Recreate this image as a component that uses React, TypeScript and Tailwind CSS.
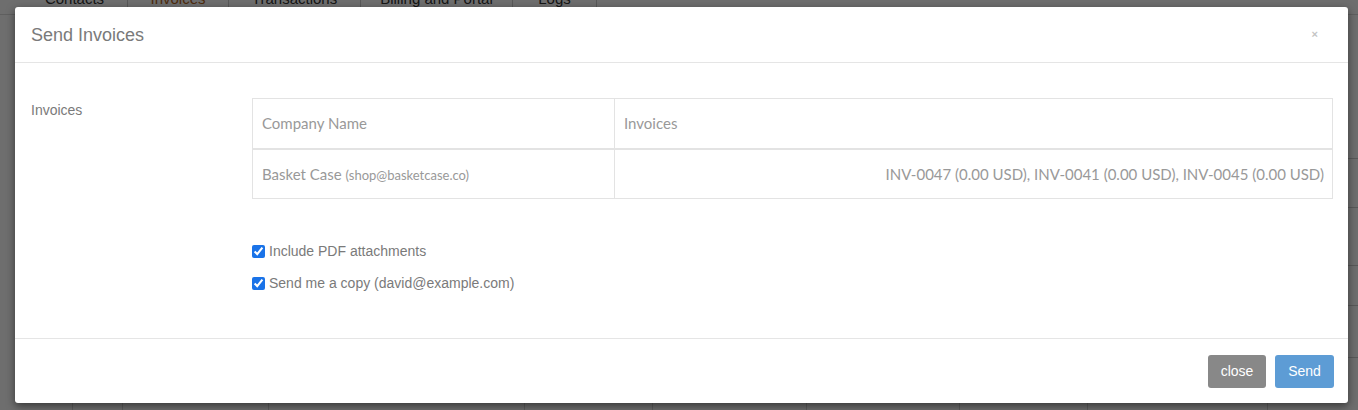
import React from "react";

const tabs = [
  { label: "Contacts", w: "w-[106px]", active: false },
  { label: "Invoices", w: "w-[101px]", active: true },
  { label: "Transactions", w: "w-[132px]", active: false },
  { label: "Billing and Portal", w: "w-[152px]", active: false },
  { label: "Logs", w: "w-[84px]", active: false },
];

const colLines = [72, 122, 268, 524, 652, 806, 959, 1087, 1267];

export default function App() {
  return (
    <div className="relative w-[1358px] h-[410px] overflow-hidden bg-white font-['Liberation_Sans',Arial,sans-serif]">
      {/* background page */}
      <div className="flex h-[30px] mt-[-15px] items-end pl-[22px] border-b border-[#ddd]">
        {tabs.map((t) => (
          <div
            key={t.label}
            className={`${t.w} h-[30px] flex items-center justify-center text-[15px] border-r border-[#ccc] ${t.active ? "text-[#b5651d]" : "text-[#333]"}`}
          >
            {t.label}
          </div>
        ))}
      </div>
      {colLines.map((x) => (
        <div key={x} className="absolute top-[120px] bottom-0 w-px bg-[#d8d8d8]" style={{ left: x }} />
      ))}
      <div className="absolute right-0 top-[120px] bottom-0 w-[10px]">
        {[158, 207, 265, 305, 357].map((y) => (
          <div key={y} className="absolute left-0 right-0 h-px bg-[#cfcfcf]" style={{ top: y - 120 }} />
        ))}
      </div>

      {/* overlay */}
      <div className="absolute inset-0 bg-black/[0.57]" />

      {/* modal */}
      <div className="absolute left-[15px] top-[7px] w-[1333px] h-[396px] bg-white rounded-[3px] shadow-[0_3px_9px_rgba(0,0,0,0.5)] flex flex-col">
        <div className="h-[56px] border-b border-[#e5e5e5] flex items-center justify-between pl-[16px] pr-[30px]">
          <h4 className="text-[18px] text-[#7a7a7a] leading-none mt-[1px]">Send Invoices</h4>
          <span className="text-[11px] text-[#c4c4c4] leading-none font-bold">×</span>
        </div>
        <div className="flex-1 flex pt-[35px] pr-[15px]">
          <div className="w-[237px] pl-[16px] pt-[2px] text-[14px] text-[#7a7a7a]">Invoices</div>
          <div className="flex-1 flex flex-col">
            <table className="w-full border border-[#e3e3e3] border-collapse font-['Lato','Open_Sans',sans-serif] text-[#999]">
              <thead>
                <tr className="h-[50px] border-b-2 border-[#e3e3e3]">
                  <th className="w-[362px] text-left font-normal text-[15px] pl-[9px] border-r border-[#e3e3e3]">Company Name</th>
                  <th className="text-left font-normal text-[15px] pl-[9px]">Invoices</th>
                </tr>
              </thead>
              <tbody>
                <tr className="h-[50px]">
                  <td className="pl-[9px] text-[15px] border-r border-[#e3e3e3]">
                    Basket Case <span className="text-[13px]">(shop@basketcase.co)</span>
                  </td>
                  <td className="pr-[8px] text-right text-[15px]">
                    INV-0047 (0.00 USD), INV-0041 (0.00 USD), INV-0045 (0.00 USD)
                  </td>
                </tr>
              </tbody>
            </table>
            <div className="mt-[46px] flex flex-col gap-[19px] text-[14px] text-[#7a7a7a]">
              <label className="flex items-center gap-[4px] h-[13px]">
                <input type="checkbox" defaultChecked className="w-[13px] h-[13px] m-0 accent-[#1a73e8]" />
                <span>Include PDF attachments</span>
              </label>
              <label className="flex items-center gap-[4px] h-[13px]">
                <input type="checkbox" defaultChecked className="w-[13px] h-[13px] m-0 accent-[#1a73e8]" />
                <span>Send me a copy (david@example.com)</span>
              </label>
            </div>
          </div>
        </div>
        <div className="h-[65px] border-t border-[#e5e5e5] flex items-center justify-end gap-[9px] pr-[14px] pt-[1px]">
          <button className="w-[58px] h-[33px] rounded-[3px] bg-[#888] text-white text-[14px]">close</button>
          <button className="w-[59px] h-[33px] rounded-[3px] bg-[#5d9cd5] text-white text-[14px]">Send</button>
        </div>
      </div>
    </div>
  );
}
